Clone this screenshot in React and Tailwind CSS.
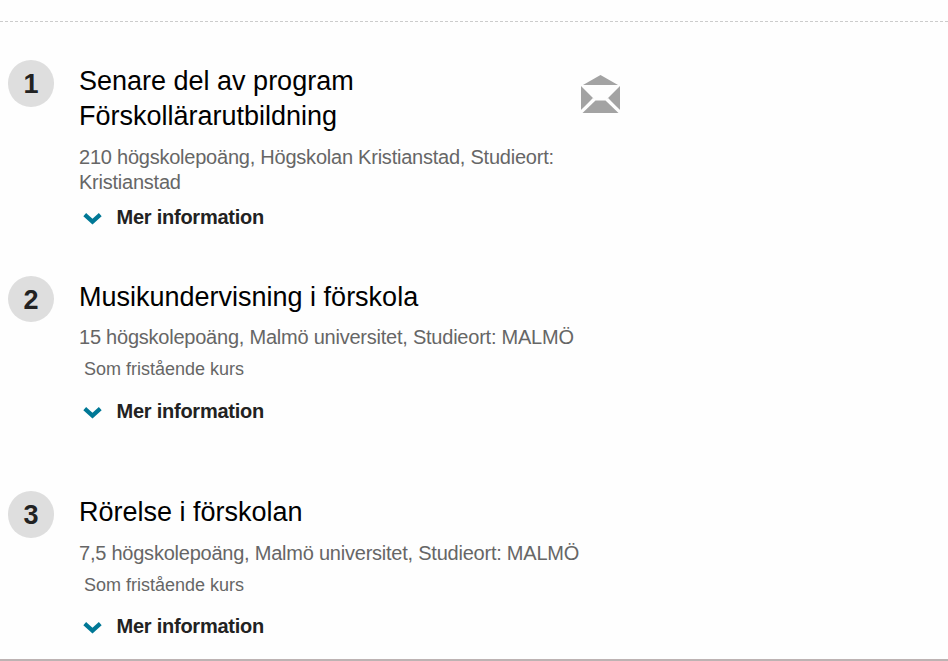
import React from 'react';

const courses = [
  {
    title: ['Senare del av program', 'Förskollärarutbildning'],
    details: ['210 högskolepoäng, Högskolan Kristianstad, Studieort:', 'Kristianstad'],
    hasMail: true,
    height: 'h-[216px]',
    circle: 'h-[47px]',
    detailsGap: 'mt-[11px]',
    infoGap: 'mt-[10px]',
  },
  {
    title: ['Musikundervisning i förskola'],
    details: ['15 högskolepoäng, Malmö universitet, Studieort: MALMÖ'],
    note: 'Som fristående kurs',
    height: 'h-[215px]',
    circle: 'h-[46px]',
    detailsGap: 'mt-[10px]',
    infoGap: 'mt-[18px]',
  },
  {
    title: ['Rörelse i förskolan'],
    details: ['7,5 högskolepoäng, Malmö universitet, Studieort: MALMÖ'],
    note: 'Som fristående kurs',
    height: 'h-[168px]',
    circle: 'h-[47px]',
    detailsGap: 'mt-[11px]',
    infoGap: 'mt-[17px]',
  },
];

function MailIcon() {
  return (
    <svg width="39" height="38" viewBox="0 0 39 38" fill="#a3a3a3">
      <path d="M2 10 19.5 0 37 10z" />
      <path d="M0 11l12.5 12.5L0 35zM39 11 26.5 23.5 39 35z" />
      <path d="M1.5 38 14.5 25.5h10l13 12.5z" />
      <path d="M12.5 23.5 0 36.5M26.5 23.5 39 36.5" stroke="#fefefe" strokeWidth="1.6" />
    </svg>
  );
}

function ChevronIcon() {
  return (
    <svg width="19" height="12" viewBox="0 0 19 12" fill="none" stroke="#007896" strokeWidth="4.2" strokeLinecap="square">
      <path d="M3.3 3l6.2 5.6L15.7 3" />
    </svg>
  );
}

function CourseItem({ course, number }) {
  return (
    <li className={`flex items-start ${course.height}`}>
      <div className={`mt-[-3px] flex w-[46px] shrink-0 items-center justify-center rounded-full bg-[#dedede] pt-[2px] text-[27px] font-bold text-[#222] ${course.circle}`}>
        {number}
      </div>
      <div className="ml-[25px] w-[502px] shrink-0 pt-px whitespace-nowrap">
        <h2 className="text-[27px] leading-[35px] text-black">
          {course.title.map((line) => (
            <span key={line} className="block">{line}</span>
          ))}
        </h2>
        <p className={`text-[20px] leading-[25px] tracking-[-0.23px] text-[#666] ${course.detailsGap}`}>
          {course.details.map((line) => (
            <span key={line} className="block">{line}</span>
          ))}
        </p>
        {course.note && (
          <p className="mt-[7px] pl-[5px] text-[18px] leading-[24px] text-[#666]">{course.note}</p>
        )}
        <button className={`flex items-center pl-1 text-[20px] leading-[25px] font-bold tracking-[-0.24px] text-[#222] ${course.infoGap}`}>
          <span className="pt-0.5"><ChevronIcon /></span>
          <span className="ml-[14.5px]">Mer information</span>
        </button>
      </div>
      {course.hasMail && (
        <div className="mt-[12px]">
          <MailIcon />
        </div>
      )}
    </li>
  );
}

export default function App() {
  return (
    <main className="flex h-[661px] w-[948px] flex-col overflow-hidden border-b-2 border-[#bdb3b3] bg-[#fefefe] pt-[21px] font-['Liberation_Sans',Arial,sans-serif]">
      <div className="border-t border-dashed border-[#ccc]" />
      <ol className="pt-[41px] pl-2">
        {courses.map((course, index) => (
          <CourseItem key={course.title[0]} course={course} number={index + 1} />
        ))}
      </ol>
    </main>
  );
}
